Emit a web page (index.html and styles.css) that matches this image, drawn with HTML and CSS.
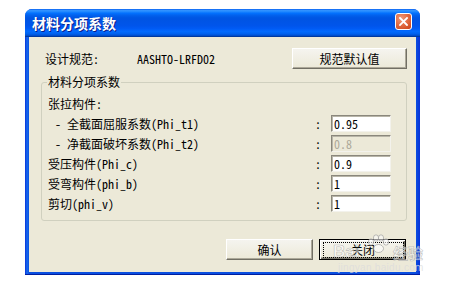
FILE: index.html
```html
<!DOCTYPE html>
<html lang="zh-CN">
<head>
<meta charset="utf-8">
<title>材料分项系数</title>
<link rel="stylesheet" href="styles.css">
</head>
<body>
<div class="stage">
  <div class="window">
    <div class="titlebar">
      <span class="title">材料分项系数</span>
      <span class="close">
        <svg width="9" height="9" viewBox="0 0 9 9"><path d="M1 1 L8 8 M8 1 L1 8" stroke="#fff" stroke-width="1.8" stroke-linecap="square"/></svg>
      </span>
    </div>
    <div class="client">
      <div class="toprow">
        <span class="code-label">设计规范:</span>
        <span class="code">AASHTO-LRFD02</span>
        <button class="btn btn-wide">规范默认值</button>
      </div>
      <fieldset class="group">
        <legend>材料分项系数</legend>
        <div class="row"><span class="label">张拉构件:</span></div>
        <div class="row"><span class="label"><span class="dash">-</span>全截面屈服系数(Phi_t1)</span><span class="colon">:</span><span class="field">0.95</span></div>
        <div class="row"><span class="label"><span class="dash">-</span>净截面破坏系数(Phi_t2)</span><span class="colon">:</span><span class="field disabled">0.8</span></div>
        <div class="row"><span class="label">受压构件(Phi_c)</span><span class="colon">:</span><span class="field">0.9</span></div>
        <div class="row"><span class="label">受弯构件(phi_b)</span><span class="colon">:</span><span class="field">1</span></div>
        <div class="row"><span class="label">剪切(phi_v)</span><span class="colon">:</span><span class="field">1</span></div>
      </fieldset>
      <div class="actions">
        <button class="btn">确认</button>
        <button class="btn btn-default"><span class="focus">关闭</span></button>
      </div>
    </div>
  </div>
  <div class="watermark">
    <svg class="paw" width="24" height="20" viewBox="0 0 24 20">
      <g fill="rgba(255,255,255,0.55)" stroke="rgba(150,150,150,0.6)" stroke-width="1">
        <ellipse cx="5" cy="8" rx="2.6" ry="3.2"/>
        <ellipse cx="10" cy="4" rx="2.6" ry="3.2"/>
        <ellipse cx="15" cy="4" rx="2.6" ry="3.2"/>
        <ellipse cx="20" cy="8" rx="2.6" ry="3.2"/>
        <ellipse cx="12.5" cy="14.5" rx="5" ry="4"/>
      </g>
    </svg>
    <span class="wm-bai">Bai</span><span class="wm-cn">经验</span>
    <span class="wm-url">jingyan.baidu.com</span>
  </div>
</div>
</body>
</html>
```

FILE: styles.css
```css
html, body {
  margin: 0;
  padding: 0;
  background: #fff;
}

body {
  font-family: "Noto Sans Mono CJK SC", "Noto Sans CJK SC", sans-serif;
  font-size: 12px;
  color: #000;
}

.stage {
  position: relative;
  width: 453px;
  height: 286px;
  padding: 9px 0 0 25px;
  box-sizing: border-box;
}

.window {
  width: 395px;
  height: 266px;
  display: flex;
  flex-direction: column;
  background: linear-gradient(to right, #0831d9 0, #166aee 2px, #0a4fe0 4px, #0a4fe0 calc(100% - 4px), #0831d9 100%);
  border-radius: 7px 7px 0 0;
  box-shadow: inset 0 -1px 0 #001ea0;
}

.titlebar {
  height: 28px;
  flex: none;
  display: flex;
  align-items: flex-start;
  justify-content: space-between;
  padding: 0 8px 0 7px;
  border-radius: 7px 7px 0 0;
  background: linear-gradient(to bottom,
    #0058ee 0%, #3593ff 4%, #288eff 8%, #127dff 12%, #036ffc 16%,
    #0262ee 22%, #0057e5 30%, #0054e3 36%, #0055eb 60%, #005bf5 70%,
    #026afe 80%, #0062ef 88%, #0052d6 94%, #0040ab 97%, #003092 100%);
}

.title {
  font-family: "Noto Sans CJK SC", sans-serif;
  font-weight: 700;
  font-size: 14px;
  line-height: 28px;
  color: #fff;
  text-shadow: 1px 1px 0 #0a1e8c;
  letter-spacing: 0;
}

.close {
  margin-top: 4px;
  width: 17px;
  height: 17px;
  box-sizing: border-box;
  border: 1px solid #fff;
  border-radius: 3px;
  background: radial-gradient(circle at 35% 30%, #f29a7a 0%, #e26d45 45%, #cc4014 100%);
  display: flex;
  align-items: center;
  justify-content: center;
}

.client {
  flex: 1;
  margin: 0 4px 3px 4px;
  background: #ece9d8;
  padding: 11px 9px 0 12px;
  display: flex;
  flex-direction: column;
}

.toprow {
  height: 21px;
  display: flex;
  align-items: center;
}

.code-label {
  width: 92px;
  padding-left: 4px;
  flex: none;
}

.code {
  flex: none;
}

.btn {
  font-family: "Noto Sans CJK SC", sans-serif;
  font-size: 12px;
  color: #000;
  width: 87px;
  height: 21px;
  padding: 0;
  box-sizing: border-box;
  background: linear-gradient(#f5f4ef, #ece9d8);
  border: 1px solid;
  border-color: #ffffff #716f64 #716f64 #ffffff;
  box-shadow: inset -1px -1px 0 #aca899;
  display: flex;
  align-items: center;
  justify-content: center;
}

.btn-wide {
  width: 115px;
  margin-left: auto;
}

.btn-default {
  border: 1px solid #000;
  box-shadow: inset 1px 1px 0 #fff, inset -1px -1px 0 #716f64, inset -2px -2px 0 #aca899;
}

.focus {
  display: flex;
  align-items: center;
  justify-content: center;
  width: 79px;
  height: 14px;
  margin-left: 1px;
  border: 1px dotted #000;
}

.group {
  margin: 6px 0 0 0;
  padding: 4px 15px 7px 6px;
  border: 1px solid #d0d0bf;
  border-radius: 3px;
  min-width: 0;
}

.group legend {
  padding: 0 1px;
  margin-left: -1px;
  line-height: 14px;
  color: #000;
}

.row {
  height: 20px;
  display: grid;
  grid-template-columns: 1fr 26px 60px;
  align-items: center;
}

.label {
  white-space: nowrap;
}

.dash {
  display: inline-block;
  width: 12px;
  margin-left: 7px;
}

.colon {
  text-align: center;
}

.field {
  height: 17px;
  box-sizing: border-box;
  background: #fff;
  border: 1px solid;
  border-color: #8a877c #f3f2ec #f3f2ec #8a877c;
  box-shadow: inset 1px 1px 0 #b8b5a8;
  padding: 0 0 0 2px;
  line-height: 15px;
  font-size: 12px;
}

.field.disabled {
  background: #ece9d8;
  color: #aca899;
}

.actions {
  margin-top: 18px;
  display: flex;
  justify-content: flex-end;
  gap: 6px;
  padding-right: 1px;
}

.watermark {
  position: absolute;
  left: 333px;
  top: 232px;
  width: 100px;
  height: 50px;
  pointer-events: none;
  font-family: "Liberation Sans", sans-serif;
}

.paw {
  position: absolute;
  left: 33px;
  top: 2px;
}

.wm-bai {
  position: absolute;
  left: 0;
  top: 10px;
  font-size: 17px;
  font-weight: 700;
  color: rgba(255, 255, 255, 0.55);
  -webkit-text-stroke: 0.6px rgba(140, 140, 140, 0.55);
}

.wm-cn {
  position: absolute;
  left: 60px;
  top: 10px;
  font-family: "Noto Sans CJK SC", sans-serif;
  font-size: 15px;
  font-weight: 700;
  color: rgba(255, 255, 255, 0.55);
  -webkit-text-stroke: 0.6px rgba(140, 140, 140, 0.55);
}

.wm-url {
  position: absolute;
  left: 5px;
  top: 30px;
  font-size: 10px;
  color: rgba(220, 220, 220, 0.8);
  letter-spacing: 0.3px;
}
```
